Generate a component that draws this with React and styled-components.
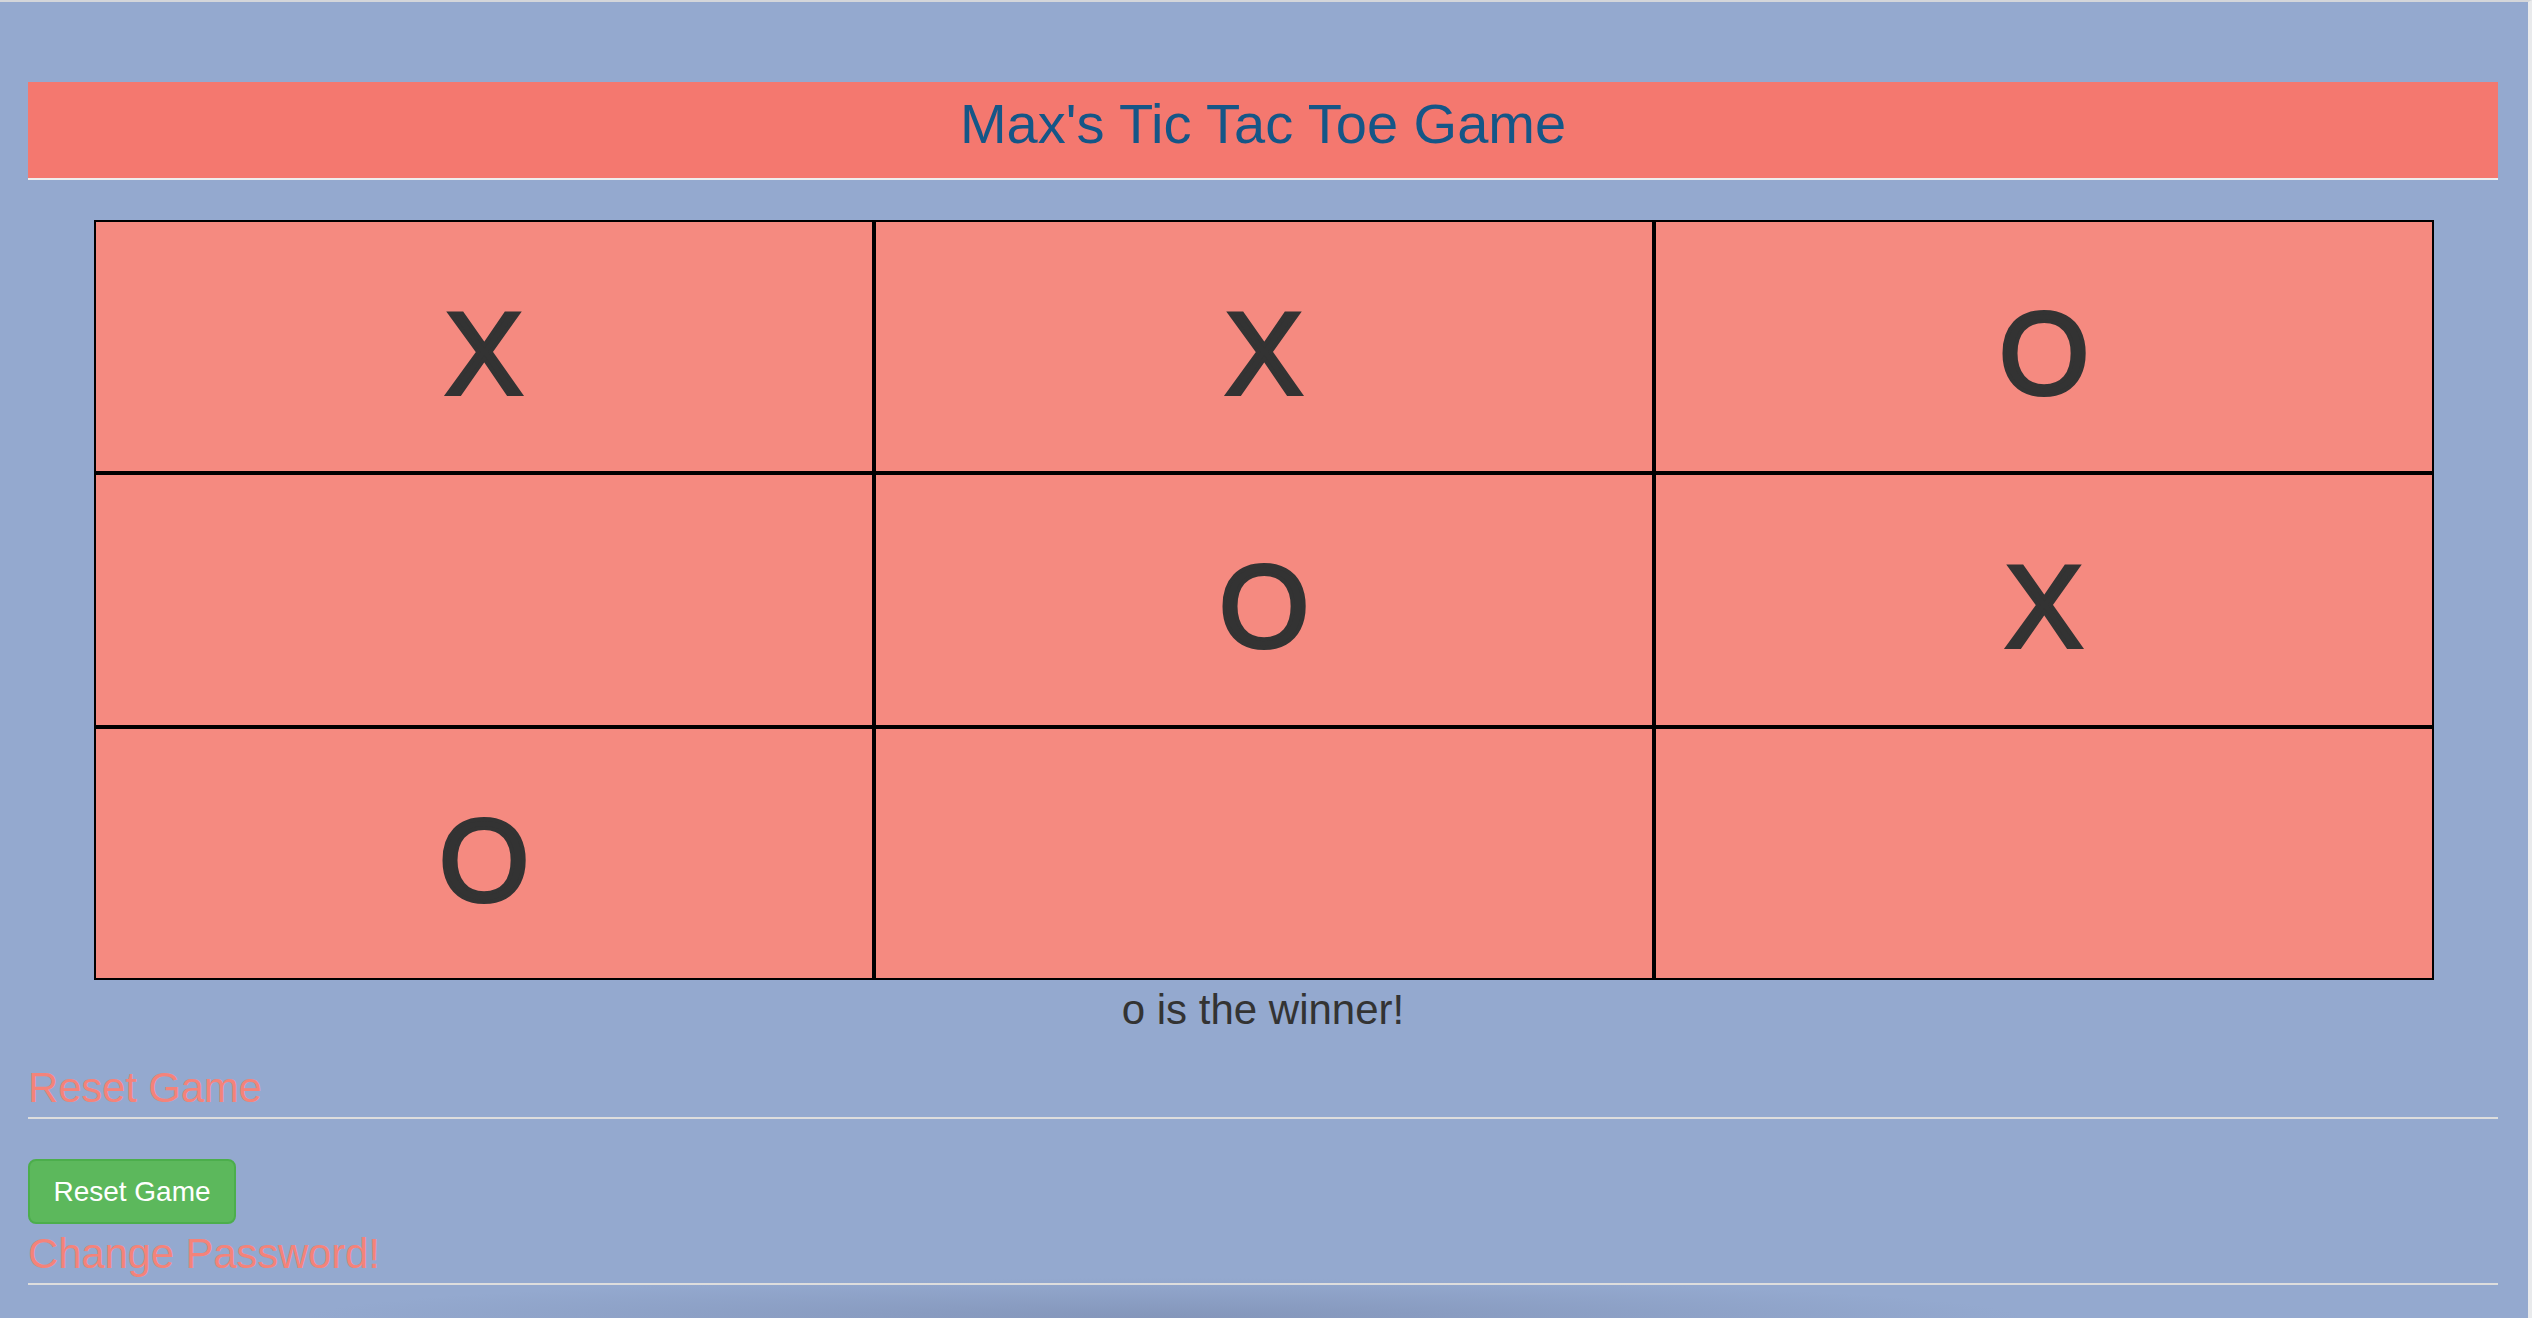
import React from "react";
import styled, { createGlobalStyle } from "styled-components";

const GlobalStyle = createGlobalStyle`
  html, body { margin: 0; padding: 0; height: 100%; }
  body {
    font-family: "Liberation Sans", Arial, Helvetica, sans-serif;
    background:
      radial-gradient(ellipse 860px 40px at 46% 100%, rgba(115, 130, 165, 0.5), rgba(115, 130, 165, 0) 100%),
      #94a9cf;
    border-top: 2px solid #d4d6da;
    border-right: 4px solid #e9eaec;
    box-sizing: border-box;
    overflow: hidden;
  }
  #root { min-height: 100%; }
`;

const Page = styled.div`
  padding: 80px 30px 0 28px;
`;

const Header = styled.header`
  height: 98px;
  box-sizing: border-box;
  padding-bottom: 14px;
  background: #f4786f;
  border-bottom: 2px solid #eeeeee;
  display: flex;
  align-items: center;
  justify-content: center;
`;

const Title = styled.h1`
  margin: 0;
  font-size: 56px;
  font-weight: 400;
  color: #155687;
`;

const Board = styled.div`
  margin: 40px 64px 0 66px;
  display: grid;
  grid-template-columns: repeat(3, 1fr);
  grid-template-rows: 249px 250px 249px;
  gap: 4px;
  background: #000;
  border: 2px solid #000;
`;

const Cell = styled.div`
  background: #f58a80;
  display: flex;
  align-items: center;
  justify-content: center;
  padding-top: 14px;
  box-sizing: border-box;
  font-size: 116px;
  line-height: 1;
  color: #333333;
  -webkit-text-stroke: 4px #333333;
`;

const Status = styled.div`
  text-align: center;
  font-size: 42px;
  line-height: 60px;
  color: #333333;
`;

const SectionTitle = styled.h3`
  margin: ${(p) => p.$top}px 0 0;
  padding-bottom: 6px;
  border-bottom: 2px solid #dddddd;
  font-size: 42px;
  font-weight: 400;
  line-height: 1.1;
  color: #f4837a;
  letter-spacing: -0.2px;
`;

const Button = styled.button`
  display: block;
  margin-top: 40px;
  width: 208px;
  height: 65px;
  background: #5cb85c;
  border: 2px solid #4cae4c;
  border-radius: 8px;
  color: #ffffff;
  font-family: "Liberation Sans", Arial, sans-serif;
  font-size: 28px;
  padding: 0;
  cursor: pointer;
`;

const board = ["X", "X", "O", "", "O", "X", "O", "", ""];

export default function App() {
  return (
    <>
      <GlobalStyle />
      <Page>
        <Header>
          <Title>Max's Tic Tac Toe Game</Title>
        </Header>
        <Board>
          {board.map((v, i) => (
            <Cell key={i}>{v}</Cell>
          ))}
        </Board>
        <Status>o is the winner!</Status>
        <SectionTitle $top={25}>Reset Game</SectionTitle>
        <Button>Reset Game</Button>
        <SectionTitle $top={7}>Change Password!</SectionTitle>
      </Page>
    </>
  );
}
